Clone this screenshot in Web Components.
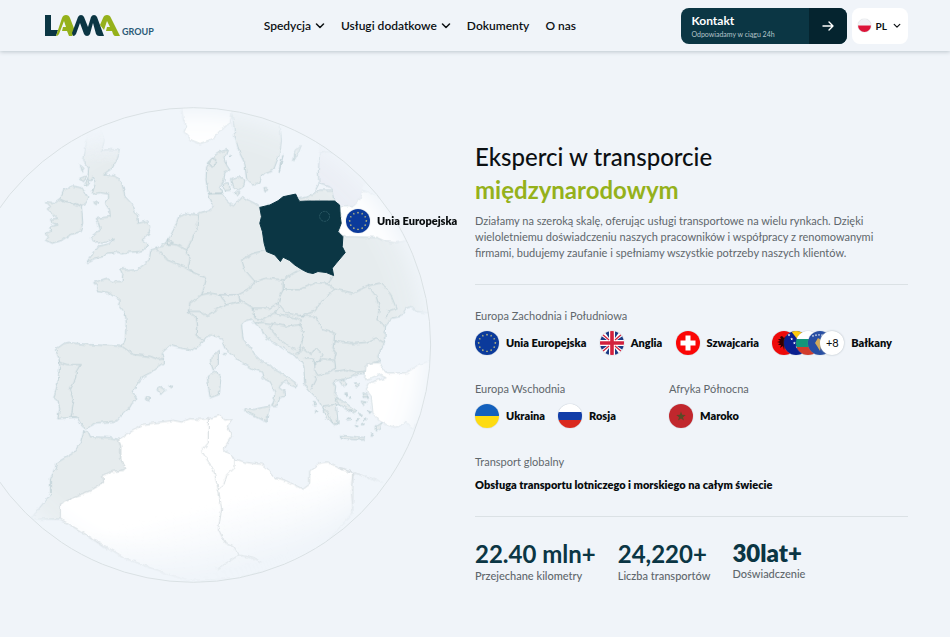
<!DOCTYPE html>
<html lang="pl">
<head>
<meta charset="utf-8">
<title>LAMA Group</title>
<style>
:root{--ink:#0b3644;--green:#95b11b;--muted:#5f676c;--bg:#f0f4f9;--line:#dbe1e5}
body{margin:0;background:var(--bg);color:#0c1013;font-family:Lato,"Open Sans",sans-serif;font-size:11px;line-height:14px}
</style>
</head>
<body>
<lama-header></lama-header>
<lama-hero></lama-hero>
<script>
const define=(name,html,setup)=>customElements.define(name,class extends HTMLElement{
  constructor(){super();const t=document.createElement('template');t.innerHTML=html;
    this.attachShadow({mode:'open'}).append(t.content.cloneNode(true));}
  connectedCallback(){if(setup)setup(this,this.shadowRoot);}
});

/* ---------- flags ---------- */
const star=(cx,cy,r,fill)=>{let p='';for(let i=0;i<10;i++){const a=-Math.PI/2+i*Math.PI/5,q=i%2?r*.42:r;p+=(cx+q*Math.cos(a)).toFixed(2)+','+(cy+q*Math.sin(a)).toFixed(2)+' ';}return `<polygon points="${p}" fill="${fill}"/>`;};
const euStars=Array.from({length:12},(_,i)=>star(12+8.3*Math.sin(i*Math.PI/6),12-8.3*Math.cos(i*Math.PI/6),1.2,'#e5d675')).join('');
const flags={
  eu:`<rect width="24" height="24" fill="#0b3a9b"/>${euStars}`,
  gb:`<rect width="24" height="24" fill="#fff"/><path d="M4 0h5v7zM15 0h5l-5 7zM0 4v5h7zM24 4v5h-7zM0 15v5l7-5zM24 15v5l-7-5zM4 24h5v-7zM15 24h5l-5-7z" fill="#1c3a84"/><path d="M2 3l7 6M22 3l-7 6M2 21l7-6M22 21l-7-6" stroke="#d2213d" stroke-width="1.3"/><path d="M12 0v24M0 12h24" stroke="#d2213d" stroke-width="3.6"/>`,
  ch:`<rect width="24" height="24" fill="#fb0606"/><path d="M12 4.500v15M4.500 12h15" stroke="#fff" stroke-width="5"/>`,
  al:`<rect width="24" height="24" fill="#ee0a0a"/><path d="M12 7l-2-2-2 1 1 2-3 0 2 2-3 1 3 1-2 2 3 0-1 3 3-2 1 4 1-4 3 2-1-3 3 0-2-2 3-1-3-1 2-2-3 0 1-2-2-1z" fill="#300"/>`,
  ba:`<rect width="24" height="24" fill="#0a1f8f"/><path d="M7 0h17v22z" fill="#fdc90e"/>${[3,7,11,15].map((v,i)=>star(5+i*2.7,v+1,1.5,'#fff')).join('')}`,
  bg:`<rect width="24" height="8" fill="#fff"/><rect y="8" width="24" height="8" fill="#14967a"/><rect y="16" width="24" height="8" fill="#d23c2c"/>`,
  xk:`<rect width="24" height="24" fill="#274ea3"/><path d="M10 7l3 2 2 4-2 1-1 6-3-5-2-3z" fill="#d2a957"/>${[4,7,10,13,16].map((v,i)=>star(v+1,5-[0,.8,1.1,.8,0][i],1.2,'#fff')).join('')}`,
  ua:`<rect width="24" height="12" fill="#1360bd"/><rect y="12" width="24" height="12" fill="#fddb12"/>`,
  ru:`<rect width="24" height="8" fill="#fff"/><rect y="8" width="24" height="8" fill="#123da8"/><rect y="16" width="24" height="8" fill="#da291f"/>`,
  ma:`<rect width="24" height="24" fill="#c1272d"/>${star(12,12.5,5,'#5a4a26')}`,
  pl:`<rect width="24" height="12" fill="#f1f2f4"/><rect y="12" width="24" height="12" fill="#dc1438"/>`
};
define('flag-icon',`<style>
:host{display:block;flex:none;width:24px;height:24px;border-radius:50%;overflow:hidden;box-shadow:0 0 1px #8a98a4}
svg{display:block;width:100%;height:100%}</style><svg viewBox="0 0 24 24" aria-hidden="true"></svg>`,
(el,r)=>{r.querySelector('svg').innerHTML=flags[el.getAttribute('code')];});

define('country-item',`<style>
:host{display:flex;align-items:center;gap:7px;font-weight:800;white-space:nowrap;color:#080c0e}
.flags{display:flex}
</style><span class="flags"><slot name="flag"></slot></span><span><slot></slot></span>`);

define('flag-stack',`<style>
:host{display:flex}
flag-icon+flag-icon,.more{margin-left:-12px}
.more{width:24px;height:24px;border-radius:50%;background:#fff;box-shadow:0 0 2px #a9b3bb;display:grid;place-items:center;font-weight:400;position:relative}
</style><flag-icon code="al"></flag-icon><flag-icon code="ba"></flag-icon><flag-icon code="bg"></flag-icon><flag-icon code="xk"></flag-icon><span class="more">+8</span>`);

define('region-group',`<style>
:host{display:block}
h2{margin:0 0 8px;font:inherit;color:var(--muted)}
.items{display:flex;align-items:center;gap:13px}
:host([spread]) .items{justify-content:space-between;gap:0;padding-right:16px}
</style><h2></h2><div class="items"><slot></slot></div>`,
(el,r)=>{r.querySelector('h2').textContent=el.getAttribute('label');});

define('stat-item',`<style>
:host{display:block;color:var(--ink)}
strong{display:block;font-size:24px;line-height:30px;font-weight:700;white-space:nowrap}
span{display:block;color:var(--muted);font-weight:500;white-space:nowrap}
:host([large]) strong{font-size:24px;line-height:28px;font-weight:800}
</style><strong><slot></slot></strong><span></span>`,
(el,r)=>{r.querySelector('span').textContent=el.getAttribute('label');});

/* ---------- header ---------- */
const chevron='<svg width="10" height="6" viewBox="0 0 10 6" aria-hidden="true"><path d="M1.500 1L5 4.500 8.500 1" fill="none" stroke="currentColor" stroke-width="1.500" stroke-linecap="round" stroke-linejoin="round"/></svg>';
define('lama-logo',`<style>
:host{display:block}
a{display:flex;align-items:flex-end;gap:2px;color:#2a5a76;text-decoration:none;font-size:9px;line-height:9px;font-weight:700}
svg{display:block}
</style><a href="#" aria-label="LAMA Group"><svg width="75" height="21" viewBox="0 0 75 21" aria-hidden="true">
<path d="M0 0h6v15h7l-2 6H0z" fill="#0b3644"/>
<path d="M11 21L17 3q1-3 4-3t4 3l5 13-3 5h-3l-2-5h-5l1-4h3l-2-6-5 13q-1 2-3 2z" fill="#95b11b"/>
<path d="M27 18L33 2q1-2 3-2 2 0 3 2l4 10 3-10q1-2 3-2 2 0 3 2l7 19h-5q-2 0-3-2L48 8l-3 11q-1 2-3 2t-3-2L35 8l-4 11q-1 2-3 2z" fill="#0b3644"/>
<path d="M55 10L58 3q1-3 4-3t4 3l9 18h-5q-1 0-2-2l-1-3h-6l1-4h3l-3-6-3 9z" fill="#95b11b"/></svg><span>GROUP</span></a>`);

define('lama-header',`<style>
:host{display:flex;align-items:center;min-height:51px;box-sizing:border-box;padding:0 42px 0 45px;box-shadow:0 1px 4px #bcc6cd;background:#f0f4f9}
nav{display:flex;align-items:center;gap:16px;margin-left:110px;font-size:12px;line-height:16px;font-weight:600}
nav button,nav a{all:unset;display:flex;align-items:center;gap:4px;cursor:pointer;white-space:nowrap}
.actions{display:flex;gap:5px;margin-left:auto}
.contact{display:flex;align-items:stretch;border-radius:8px;overflow:hidden;background:#0b3644;color:#fff;text-decoration:none;height:36px}
.copy{padding:5px 34px 0 10px}
b{display:block;font-size:12px;line-height:16px;font-weight:700}
small{display:block;font-size:7px;line-height:10px;color:#b4c4ca;white-space:nowrap}
.arrow{width:38px;background:#05242f;display:grid;place-items:center}
.lang{all:unset;box-sizing:border-box;cursor:pointer;display:flex;align-items:center;gap:5px;height:36px;padding:0 7px 0 6px;border-radius:8px;background:#fff;font-size:10px;font-weight:700}
.lang flag-icon{width:13px;height:13px}
.lang svg{width:8px;margin-left:1px}
</style>
<lama-logo></lama-logo>
<nav><button type="button">Spedycja ${chevron}</button><button type="button">Usługi dodatkowe ${chevron}</button><a href="#">Dokumenty</a><a href="#">O nas</a></nav>
<div class="actions"><a class="contact" href="#"><span class="copy"><b>Kontakt</b><small>Odpowiadamy w ciągu 24h</small></span><span class="arrow"><svg width="12" height="10" viewBox="0 0 12 10" aria-hidden="true"><path d="M1 5h10M7 1l4 4-4 4" fill="none" stroke="#fff" stroke-width="1.400" stroke-linecap="round" stroke-linejoin="round"/></svg></span></a>
<button type="button" class="lang"><flag-icon code="pl"></flag-icon><span>PL</span>${chevron}</button></div>`);

/* ---------- globe ---------- */
const land=[
 // Great Britain
 'M262 100L300 85 312 120 305 150 330 148 358 149 352 175 335 205 310 222 345 228 365 250 375 290 398 315 405 335 412 345 415 370 440 363 452 380 445 405 425 420 443 432 438 445 415 455 380 458 365 462 350 457 320 460 310 470 285 475 258 488 275 465 295 440 325 432 343 418 325 422 290 430 270 412 285 400 300 390 295 370 288 355 330 350 328 330 315 310 325 295 325 282 300 278 275 283 285 250 278 228 270 245 262 235 265 205 250 180Z',
 'M240 195L252 205 246 215ZM238 235L256 228 250 245ZM252 255L262 238 265 250ZM280 308L292 302 288 314Z',
 // Ireland
 'M180 297L165 308 138 305 150 320 140 330 160 345 172 355 150 358 155 368 170 375 148 382 150 395 135 400 145 410 137 420 155 430 185 420 210 405 240 395 247 370 245 340 243 318 222 310 200 305Z',
 'M180 297L190 270 215 258 245 263 262 290 258 305 243 318 222 310 200 305Z',
 // Denmark
 'M625 280L618 240 620 200 645 165 660 155 683 148 675 170 680 195 690 210 675 215 672 240 660 260 665 280ZM625 185L635 175 648 178 642 198 628 196ZM670 250L688 248 690 270 672 272ZM695 235L715 230 735 240 730 260 715 270 700 262ZM700 275L720 278 712 288ZM690 165L696 168 692 171ZM792 263L800 262 804 270 796 273Z',
 // Sweden, Gotland, Oland
 'M690 20L700 60 705 110 720 160 735 190 740 235 760 255 780 250 785 225 820 212 840 160 845 120 840 60 830 30ZM885 155L905 135 895 160 882 182ZM850 165L838 215 842 190Z',
 // mainland
 'M625 282L640 318 630 330 600 338 592 345 560 340 535 352 525 380 510 410 495 430 470 445 452 450 447 480 430 495 410 510 380 512 372 503 358 505 368 525 365 545 335 545 320 535 280 548 290 560 290 572 320 578 345 590 360 600 355 615 375 640 378 670 375 720 365 740 330 738 270 735 215 730 205 728 190 732 165 750 175 775 178 800 172 850 160 895 172 905 178 925 172 958 205 955 230 953 245 980 258 990 270 980 290 970 350 965 370 942 388 925 395 912 410 902 398 880 410 855 430 830 450 820 475 800 490 790 490 775 485 760 510 738 540 745 575 752 600 735 610 720 635 705 665 718 680 750 720 785 755 807 785 817 790 835 810 845 825 875 822 905 815 918 832 918 840 895 855 890 852 875 838 865 845 850 860 845 875 858 888 862 888 850 860 830 825 810 810 795 785 785 765 765 750 740 730 720 727 695 725 675 740 662 755 658 765 670 785 690 800 715 810 720 840 740 870 760 895 775 912 800 915 855 925 870 935 880 950 895 970 925 980 955 1005 980 1015 970 1010 945 995 920 1020 915 1015 895 1005 885 1008 860 1000 845 1025 840 1045 838 1060 828 1090 825 1100 815 1100 795 1120 790 1140 785 1135 770 1150 740 1155 730 1158 680 1170 665 1180 655 1205 650 1220 625 1235 620 1250 635 1290 640 1330 660 1300 560 1230 420 1190 428 1160 425 1130 412 1040 410 1020 400 1025 350 1020 315 1005 303 1000 270 960 270 925 290 780 322 765 310 745 300 725 290 700 318 680 300 665 280Z',
 // Greece and the Aegean islands
 'M965 920L1010 915 1015 970 1000 975 985 940ZM1010 895L1030 905 1072 935 1066 942 1035 925 1012 908ZM1022 1008L1050 1010 1095 1015 1090 1022 1050 1020 1025 1018ZM1020 845L1035 840 1045 852 1030 860ZM1065 850L1080 852 1070 862ZM1090 880L1105 885 1095 895ZM1085 905L1100 908 1090 915ZM1130 980L1145 970 1140 990 1130 995ZM1115 1000L1120 1010 1112 1010Z',
 'M1050 930l8 4-6 4zM1080 942l9 3-7 5zM1045 955l6 6-8 1zM1070 960l8 2-6 5zM1095 955l6 3-6 4zM1105 935l8 2-6 5zM1050 890l6 3-6 4zM1036 880l8 4-7 4zM1090 970l5 4-6 3zM1070 975l6 3-7 4zM1100 890l7 2-5 6zM945 905l6 10-7 2zM950 930l5 8-8 1z',
 // Mediterranean islands
 'M632 775L655 755 655 795 640 812 632 790ZM622 830L650 815 662 840 658 885 630 895 625 860ZM735 925L760 930 810 920 800 968 770 952 735 935ZM470 870L485 860 495 872 482 885ZM506 858L518 860 514 866ZM438 892L448 892 446 904 436 900ZM668 762l12 0-6 4z',
 // Morocco
 'M250 995L265 1000 270 1012 330 1015 355 1020 362 1040 362 1080 377 1105 370 1113 330 1118 308 1130 310 1150 270 1175 230 1190 180 1215 180 1260 90 1260 150 1185 150 1140 170 1090 220 1060 240 1030Z'];
const white=[
 'M545 20L550 60 560 75 552 95 575 120 600 130 640 115 665 85 690 70 698 20Z',
 'M1100 795L1120 790 1140 790 1160 820 1220 820 1260 795 1310 780 1300 900 1240 990 1220 965 1205 980 1185 983 1160 975 1140 965 1120 940 1115 890 1100 870 1110 850 1160 835 1140 825 1115 835 1095 840Z',
 'M1025 320L1060 320 1080 300 1090 270 1160 300 1230 420 1190 428 1160 425 1130 412 1040 410 1020 400Z'];
const africa=[
 'M355 1020L380 1005 430 975 520 963 545 968 570 958 600 960 625 958 660 948 675 962 697 958 682 980 695 1010 670 1050 690 1065 705 1080 740 1090 785 1095 805 1110 825 1135 860 1145 910 1170 930 1155 930 1115 960 1092 985 1088 1020 1108 1060 1120 1060 1240 980 1330 860 1400 700 1440 560 1445 380 1380 180 1260 180 1215 230 1190 270 1175 310 1150 308 1130 330 1118 370 1113 377 1105 362 1080 362 1040Z'];
const borders=[
 'M795 452L760 460 725 480 735 510 765 545 800 535 850 540 880 520 905 508',
 'M765 545L745 570 715 585 720 600 760 625 810 625 835 610 840 590 850 570 850 540',
 'M850 570L900 570 950 548 985 552 1002 527','M835 610L860 640 900 648 945 635 970 600 1005 568 985 552',
 'M1005 568L1060 580 1105 558 1140 550 1170 575 1190 625 1165 635 1160 655','M1105 558L1130 590 1140 625 1135 660 1158 680',
 'M760 625L765 655 790 660 825 640 835 625 835 610','M765 670L790 668 820 672 810 685 830 710 860 735 890 750',
 'M820 672L860 680 900 675 912 700 905 740 890 765','M900 648L945 650 970 690 1005 700 1003 725 1060 732 1100 728 1130 715 1155 730',
 'M825 640L860 648 905 660 900 675','M910 745L935 765 950 745 970 765 958 785 945 795 940 775 915 775','M1003 725L1000 745 1010 760 1005 780',
 'M945 795L970 778 1005 782 1008 805 985 820 955 828 945 812Z','M1008 815L1040 810 1070 818 1098 815','M945 828L950 840 935 870','M910 745L895 765',
 'M365 740L400 765 450 770 475 780 490 778','M175 787L200 795 240 795 228 815 225 840 210 870 220 905 212 952 230 953',
 'M470 445L500 480 550 500 580 518 620 535 605 585','M495 430L530 435 560 450 570 480 565 500 580 518','M595 345L590 390 570 430 560 450','M500 420l20 8-12 6z',
 'M605 585L570 610 565 635 600 635 620 648 650 630 680 615 660 585 630 580Z','M680 615L720 605 720 600','M660 585L715 585','M585 650L590 680 588 710 610 720','M565 635L585 650',
 'M625 282L640 280 665 280','M960 160L980 155 1010 155 1040 160','M960 160L956 210 958 250 945 275','M960 250L990 260 1000 270','M1005 303L925 303'];
const africaLines=['M625 958L625 1030 605 1055 640 1110 655 1170 665 1230 655 1290 675 1330 700 1340 718 1368 650 1410','M705 1080L705 1105 680 1130 672 1155 655 1170','M718 1368L760 1378 785 1390','M1020 1108L1060 1120 1110 1135 1150 1150','M1060 1120L1055 1170 1060 1240','M180 1260L240 1295 320 1350'];
const poland='M780 322L810 315 835 302 850 290 888 282 895 297 900 304 920 303 1005 303 1020 315 1022 350 1025 370 1015 395 1030 410 1028 440 1037 458 1010 490 998 505 1002 527 980 518 955 515 940 521 925 518 912 512 905 508 885 495 870 482 850 472 842 485 825 465 800 455 793 430 788 395 780 370 785 350Z';
const paths=(a,attr='')=>a.map(d=>`<path d="${d}" ${attr}/>`).join('');
define('europe-globe',`<style>
:host{display:block;position:relative}
svg.map{display:block;width:100%;height:auto}
.pin{position:absolute;left:82%;top:21.400%;white-space:nowrap}
</style>
<svg class="map" viewBox="-137 20 1433 1433" role="img" aria-label="Mapa Europy">
<defs>
<clipPath id="disc"><circle cx="580" cy="736" r="714"/></clipPath>
<radialGradient id="fade" gradientUnits="userSpaceOnUse" cx="580" cy="736" r="714"><stop offset=".84" stop-color="#fff"/><stop offset=".93" stop-color="#bbb"/><stop offset="1" stop-color="#222"/></radialGradient>
<mask id="edge" maskUnits="userSpaceOnUse" x="-137" y="20" width="1433" height="1433"><circle cx="580" cy="736" r="714" fill="url(#fade)"/></mask>
<linearGradient id="sand" gradientUnits="userSpaceOnUse" x1="560" y1="1230" x2="610" y2="1430"><stop offset="0" stop-color="#fff"/><stop offset="1" stop-color="#fff" stop-opacity=".1"/></linearGradient>
<linearGradient id="scot" gradientUnits="userSpaceOnUse" x1="0" y1="85" x2="0" y2="190"><stop offset="0" stop-color="#000"/><stop offset="1" stop-color="#fff"/></linearGradient>
<mask id="north" maskUnits="userSpaceOnUse" x="220" y="60" width="260" height="450"><rect x="220" y="60" width="260" height="450" fill="url(#scot)"/></mask>
<filter id="coast" x="-5%" y="-5%" width="110%" height="110%"><feTurbulence type="fractalNoise" baseFrequency=".06" numOctaves="2" seed="4" result="n"/><feDisplacementMap in="SourceGraphic" in2="n" scale="12" xChannelSelector="R" yChannelSelector="G"/></filter>
</defs>
<circle cx="580" cy="736" r="714" fill="#f0f5fa" stroke="#dae1e4" stroke-width="3"/>
<g clip-path="url(#disc)"><g mask="url(#edge)" stroke="#b9ccd2" stroke-width="2.500" stroke-linejoin="round" filter="url(#coast)">
<path d="M1005 303L1000 270 960 250 956 210 960 120 1120 180 1090 270 1080 300 1060 320 1020 315Z" fill="#eaedf4" stroke="none"/>
<g fill="#e6ecee"><g mask="url(#north)">${paths(land.slice(0,1))}</g>${paths(land.slice(1))}</g>
<g fill="#fff" stroke="#cfdade">${paths(white)}</g>
<g fill="url(#sand)" stroke="#cdd6da">${paths(africa)}</g>
<g fill="none" stroke="#cdd6da">${paths(africaLines)}</g>
<g fill="none">${paths(borders)}</g>
</g>
<path d="${poland}" fill="#0b3644" stroke="#0b3644" stroke-width="3" stroke-linejoin="round"/>
<circle cx="975" cy="349" r="15" fill="none" stroke="#31606a" stroke-width="2.500" stroke-dasharray="7 2"/></g>
</svg>
<country-item class="pin"><flag-icon slot="flag" code="eu"></flag-icon>Unia Europejska</country-item>`);

/* ---------- main section ---------- */
define('lama-hero',`<style>
:host{display:grid;grid-template-columns:1fr 1fr;align-items:end;padding:56px 42px 53px;overflow:hidden}
europe-globe{width:110%;margin-left:-20%}
h1{margin:0;font-size:24px;line-height:33px;font-weight:500}
h1 em{display:block;font-style:normal;font-weight:700;color:var(--green)}
p{margin:7px 0 23px;line-height:16px;color:var(--muted);max-width:420px}
hr{margin:0;border:0;border-top:1px solid var(--line)}
.regions{display:grid;gap:27px;padding:24px 0 23px}
.pair{display:grid;grid-template-columns:194px 1fr}
.global{font-weight:800;line-height:16px;color:#080c0e}
.stats{display:flex;gap:22px;padding-top:22px}
</style>
<europe-globe></europe-globe>
<section>
<h1>Eksperci w transporcie <em>międzynarodowym</em></h1>
<p>Działamy na szeroką skalę, oferując usługi transportowe na wielu rynkach. Dzięki wieloletniemu doświadczeniu naszych pracowników i współpracy z renomowanymi firmami, budujemy zaufanie i spełniamy wszystkie potrzeby naszych klientów.</p>
<hr>
<div class="regions">
<region-group label="Europa Zachodnia i Południowa" spread>
<country-item><flag-icon slot="flag" code="eu"></flag-icon>Unia Europejska</country-item>
<country-item><flag-icon slot="flag" code="gb"></flag-icon>Anglia</country-item>
<country-item><flag-icon slot="flag" code="ch"></flag-icon>Szwajcaria</country-item>
<country-item><flag-stack slot="flag"></flag-stack>Bałkany</country-item>
</region-group>
<div class="pair">
<region-group label="Europa Wschodnia"><country-item><flag-icon slot="flag" code="ua"></flag-icon>Ukraina</country-item><country-item><flag-icon slot="flag" code="ru"></flag-icon>Rosja</country-item></region-group>
<region-group label="Afryka Północna"><country-item><flag-icon slot="flag" code="ma"></flag-icon>Maroko</country-item></region-group>
</div>
<region-group label="Transport globalny"><span class="global">Obsługa transportu lotniczego i morskiego na całym świecie</span></region-group>
</div>
<hr>
<div class="stats">
<stat-item label="Przejechane kilometry">22.40 mln+</stat-item>
<stat-item label="Liczba transportów">24,220+</stat-item>
<stat-item label="Doświadczenie" large>30lat+</stat-item>
</div>
</section>`);
</script>
</body>
</html>
